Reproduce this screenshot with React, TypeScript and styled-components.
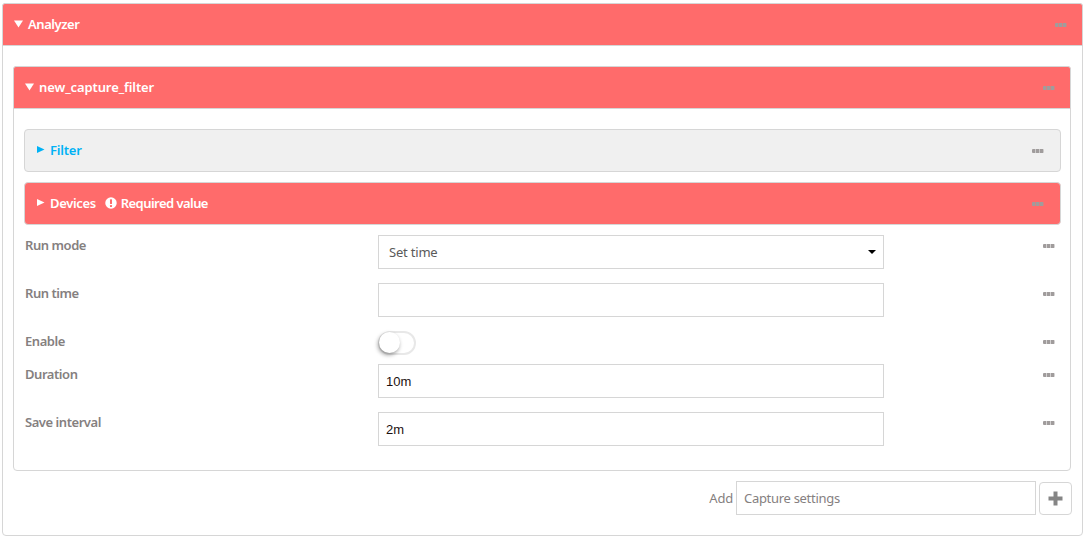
import styled, { createGlobalStyle } from "styled-components";
import { ReactNode } from "react";

const GlobalStyle = createGlobalStyle`
  html, body {
    margin: 0;
    padding: 0;
    background: #fff;
  }
  body {
    font-family: "Noto Sans", "Open Sans", sans-serif;
    font-size: 13px;
  }
`;

const Page = styled.div`
  width: 1086px;
  height: 537px;
  padding: 3px 3px 0 2px;
  box-sizing: border-box;
  overflow: hidden;
`;

const Panel = styled.section`
  border: 1px solid #d6d6d6;
  border-radius: 4px;
  background: #fff;
  &.outer {
    height: 533px;
    box-sizing: border-box;
  }
`;

const Header = styled.div<{ $grey?: boolean; $left: number }>`
  height: 43px;
  box-sizing: border-box;
  margin: -1px -1px 0;
  padding: 0 15px 2px ${(p) => p.$left}px;
  display: flex;
  align-items: center;
  gap: 5px;
  border: 1px solid #d6d6d6;
  border-radius: 3px 3px 0 0;
  background: ${(p) => (p.$grey ? "#f0f0f0" : "#ff6b6b")};
  color: ${(p) => (p.$grey ? "#00b2f5" : "#fff")};
  font-weight: 600;
  font-size: 13px;
`;

const Bar = styled(Header)`
  margin: 0;
  padding-right: 16px;
  border-radius: 4px;
`;

const Arrow = styled.svg`
  width: 9px;
  height: 9px;
  flex: none;
  fill: currentColor;
`;

const Title = styled.span<{ $spacing: number }>`
  flex: 1;
  display: flex;
  align-items: center;
  white-space: nowrap;
  letter-spacing: ${(p) => p.$spacing}px;
`;

const Warning = styled.span`
  display: inline-flex;
  align-items: center;
  gap: 4px;
  margin-left: 9px;
  letter-spacing: -0.55px;
`;

const Dots = styled.span`
  width: 12px;
  height: 4px;
  flex: none;
  margin-top: 2px;
  border-radius: 1px;
  background: repeating-linear-gradient(90deg, #a09c9c 0 3px, rgba(160, 156, 156, 0.45) 3px 4px);
`;

const OuterBody = styled.div`
  padding: 20px 0 0 10px;
`;

const InnerPanel = styled(Panel)`
  width: 1058px;
  height: 405px;
  box-sizing: border-box;
`;

const InnerBody = styled.div`
  padding: 20px 9px 0 10px;
  display: flex;
  flex-direction: column;
  gap: 10px;
`;

const Fields = styled.div`
  display: flex;
  flex-direction: column;
`;

const Row = styled.div<{ $height: number }>`
  height: ${(p) => p.$height}px;
  display: grid;
  grid-template-columns: 354px 506px 1fr;
  align-items: start;
`;

const Label = styled.label`
  padding: 1px 0 0 1px;
  font-weight: 600;
  font-size: 13px;
  line-height: 18px;
  color: #85807f;
  letter-spacing: -0.45px;
`;

const Box = styled.div<{ $arial?: boolean }>`
  height: 34px;
  box-sizing: border-box;
  border: 1px solid #d6d6d6;
  display: flex;
  align-items: center;
  padding: 0 ${(p) => (p.$arial ? 7 : 10)}px;
  font-family: ${(p) => (p.$arial ? '"Liberation Sans", Arial, sans-serif' : "inherit")};
  font-size: 13px;
  color: ${(p) => (p.$arial ? "#1c1010" : "#5a5a5a")};
  letter-spacing: ${(p) => (p.$arial ? "0" : "-0.2px")};
`;

const SelectBox = styled(Box)`
  justify-content: space-between;
  padding-right: 7px;
  &::after {
    content: "";
    border-left: 4px solid transparent;
    border-right: 4px solid transparent;
    border-top: 4px solid #000;
  }
`;

const RowMenu = styled.div`
  display: flex;
  justify-content: flex-end;
  padding: 7px 6px 0 0;
`;

const Toggle = styled.div`
  position: relative;
  width: 38px;
  height: 24px;
  box-sizing: border-box;
  border: 2px solid #e8e8e8;
  border-radius: 12px;
  background: #fff;
  &::after {
    content: "";
    position: absolute;
    left: -1px;
    top: -1px;
    width: 21px;
    height: 21px;
    border-radius: 50%;
    background: #fff;
    box-shadow: -1px 2px 4px rgba(0, 0, 0, 0.4);
  }
`;

const AddRow = styled.div`
  display: flex;
  justify-content: flex-end;
  align-items: center;
  gap: 3px;
  margin-top: 10px;
  padding-right: 10px;
  color: #85807f;
  font-size: 13px;
`;

const AddLabel = styled.span`
  letter-spacing: -0.2px;
`;

const AddBox = styled(Box)`
  width: 300px;
  padding: 0 7px;
  color: #85807f;
  letter-spacing: -0.3px;
`;

const AddButton = styled.button`
  width: 33px;
  height: 33px;
  padding: 0;
  border: 1px solid #d6d6d6;
  border-radius: 4px;
  background: #fff;
  display: flex;
  align-items: center;
  justify-content: center;
  svg {
    width: 15px;
    height: 15px;
    fill: #858585;
  }
`;

const Down = () => (
  <Arrow viewBox="0 0 9 9">
    <path d="M0 1.5h9L4.5 8.5z" />
  </Arrow>
);

const Right = () => (
  <Arrow viewBox="0 0 9 9">
    <path d="M1 1l7.5 3.5L1 8z" />
  </Arrow>
);

function Field({ label, height, children }: { label: string; height: number; children: ReactNode }) {
  return (
    <Row $height={height}>
      <Label>{label}</Label>
      <div>{children}</div>
      <RowMenu>
        <Dots />
      </RowMenu>
    </Row>
  );
}

export default function App() {
  return (
    <Page>
      <GlobalStyle />
      <Panel className="outer">
        <Header $left={11}>
          <Down />
          <Title $spacing={-0.45}>Analyzer</Title>
          <Dots />
        </Header>
        <OuterBody>
          <InnerPanel>
            <Header $left={11}>
              <Down />
              <Title $spacing={-0.1}>new_capture_filter</Title>
              <Dots />
            </Header>
            <InnerBody>
              <Bar $grey $left={11}>
                <Right />
                <Title $spacing={-0.2}>Filter</Title>
                <Dots />
              </Bar>
              <Bar $left={11}>
                <Right />
                <Title $spacing={-0.35}>
                  Devices
                  <Warning>
                    <svg width="12" height="12" viewBox="0 0 13 13">
                      <circle cx="6.5" cy="6.5" r="6.2" fill="#fff" />
                      <rect x="5.4" y="2.4" width="2.2" height="5.2" rx="0.6" fill="#ff6b6b" />
                      <rect x="5.4" y="8.6" width="2.2" height="2.2" rx="0.6" fill="#ff6b6b" />
                    </svg>
                    Required value
                  </Warning>
                </Title>
                <Dots />
              </Bar>
              <Fields>
                <Field label="Run mode" height={48}>
                  <SelectBox>Set time</SelectBox>
                </Field>
                <Field label="Run time" height={48}>
                  <Box />
                </Field>
                <Field label="Enable" height={33}>
                  <Toggle />
                </Field>
                <Field label="Duration" height={48}>
                  <Box $arial>10m</Box>
                </Field>
                <Field label="Save interval" height={48}>
                  <Box $arial>2m</Box>
                </Field>
              </Fields>
            </InnerBody>
          </InnerPanel>
          <AddRow>
            <AddLabel>Add</AddLabel>
            <AddBox>Capture settings</AddBox>
            <AddButton aria-label="Add">
              <svg viewBox="0 0 15 15">
                <path d="M5.5 0.5h4v5h5v4h-5v5h-4v-5h-5v-4h5z" />
              </svg>
            </AddButton>
          </AddRow>
        </OuterBody>
      </Panel>
    </Page>
  );
}
